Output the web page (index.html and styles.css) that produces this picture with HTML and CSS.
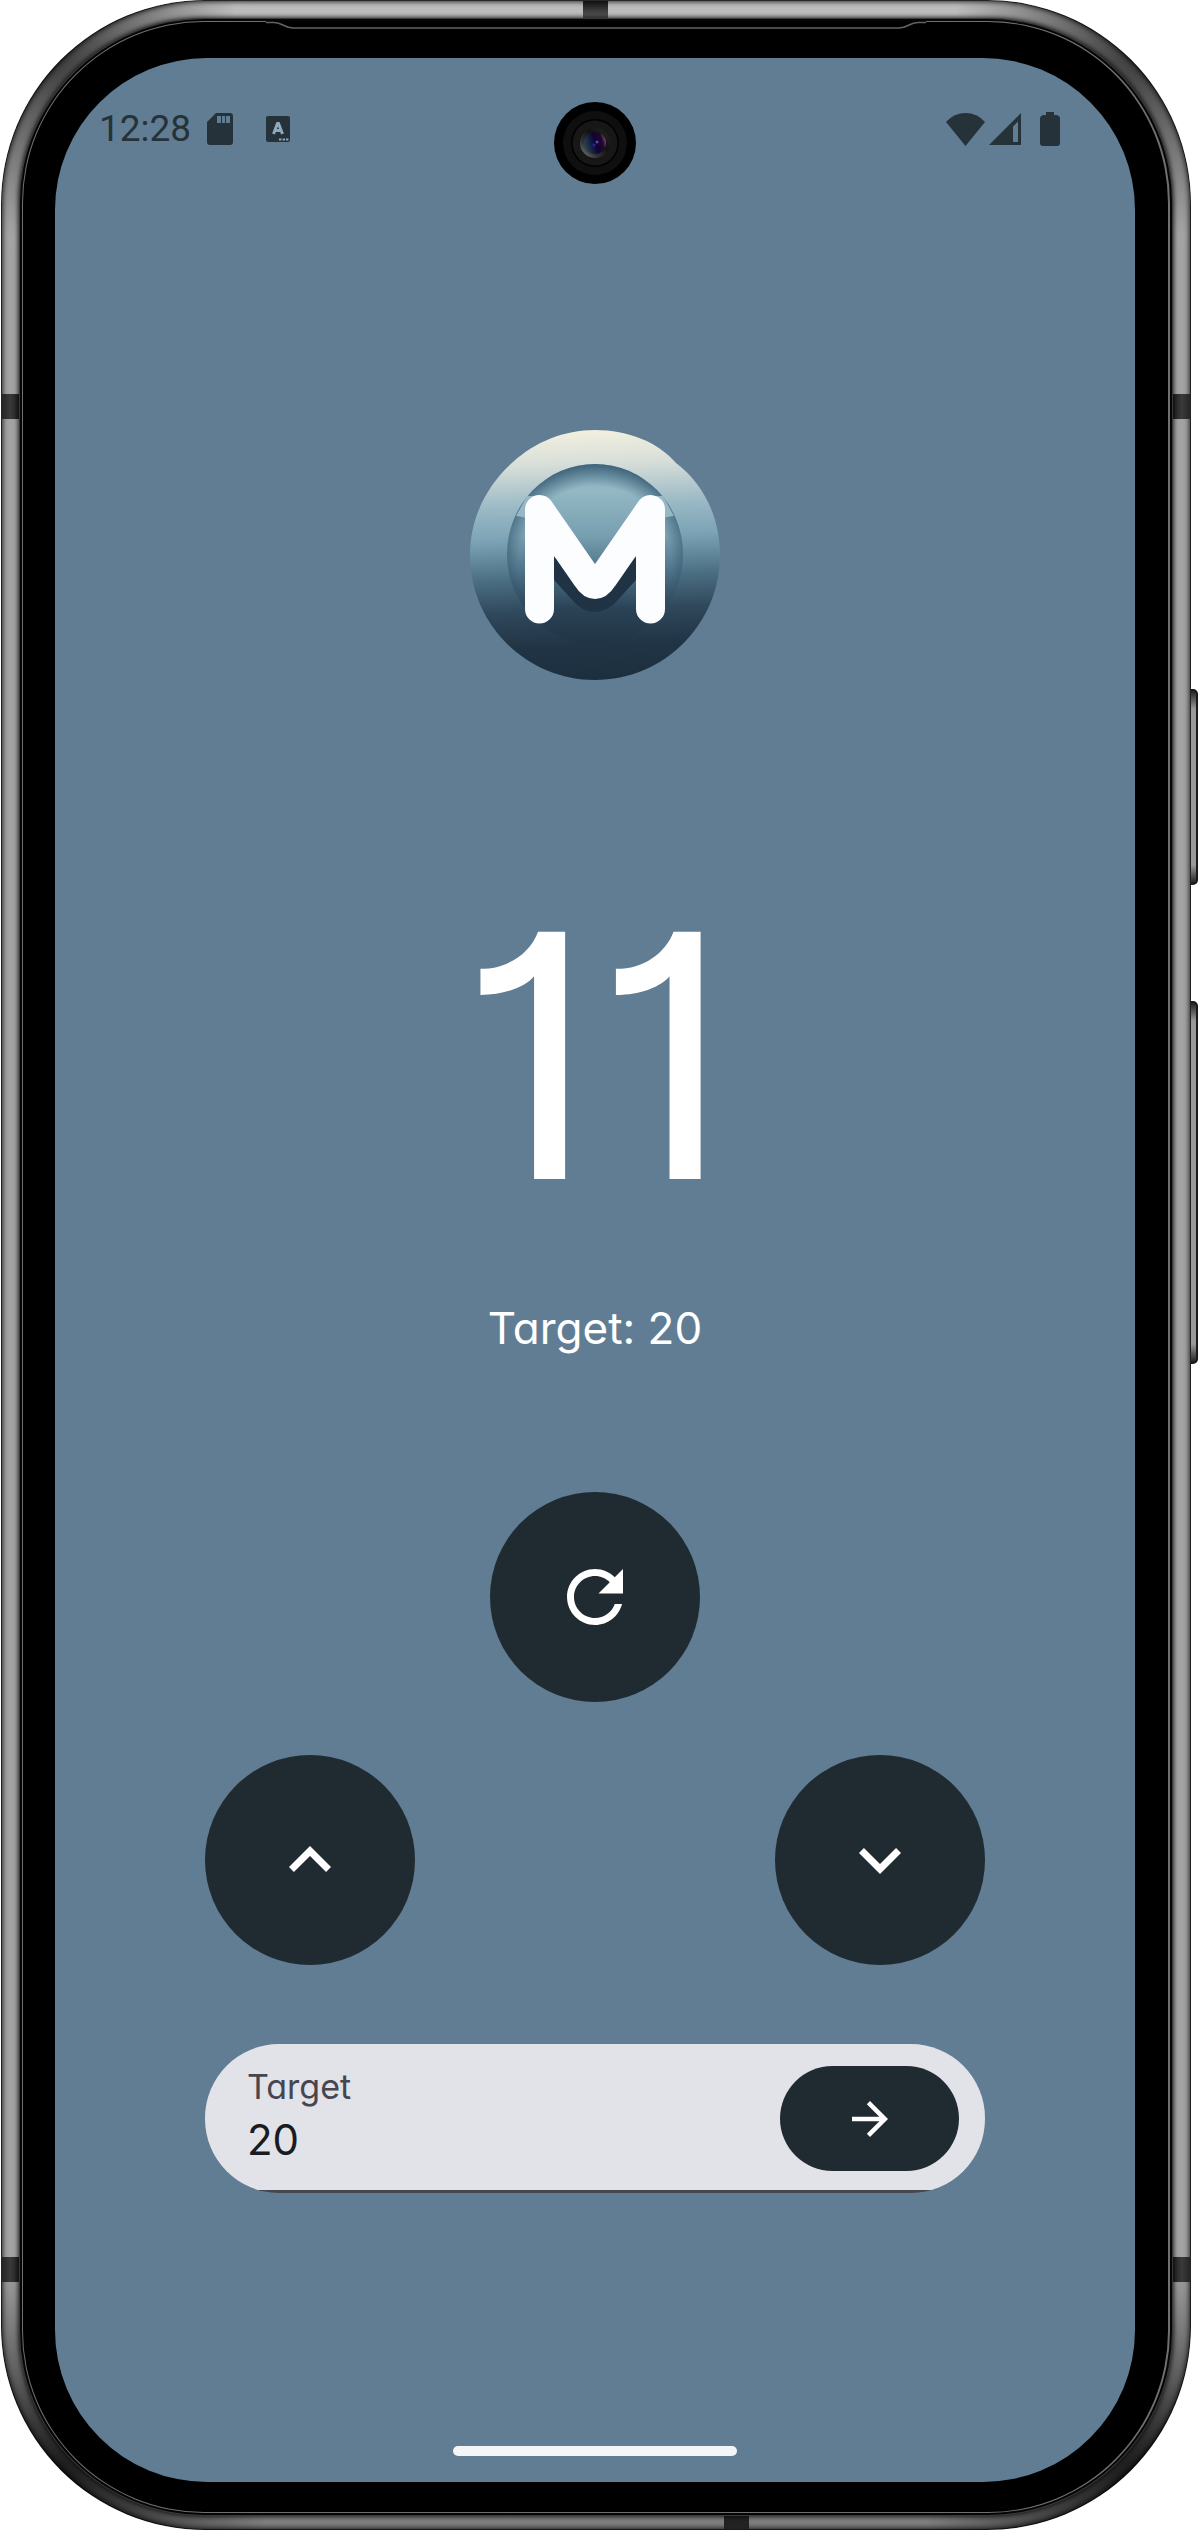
FILE: index.html
```html
<!DOCTYPE html>
<html lang="en">
<head>
<meta charset="utf-8">
<meta name="viewport" content="width=device-width, initial-scale=1">
<title>Counter</title>
<link rel="stylesheet" href="styles.css">
</head>
<body>
<div class="device">
  <span class="side-key side-key-power"></span>
  <span class="side-key side-key-volume"></span>
  <div class="frame">
    <span class="seam seam-top"></span>
    <span class="seam seam-bottom"></span>
    <span class="seam seam-left seam-upper"></span>
    <span class="seam seam-right seam-upper"></span>
    <span class="seam seam-left seam-lower"></span>
    <span class="seam seam-right seam-lower"></span>
    <div class="bezel">
      <svg class="earpiece" viewBox="0 0 660 10" aria-hidden="true"><path d="M0 0H660V3H0Z" fill="#000"/><path d="M0 1.5H8C17 1.5 18 7 27 7H633C642 7 643 1.5 652 1.5H660" fill="none" stroke="#636363" stroke-width="1.6"/></svg>
      <div class="screen">
        <header class="status">
          <div class="status-group">
            <span class="clock">12:28</span>
            <svg class="icon-sd" viewBox="0 0 26 32" aria-hidden="true"><path fill-rule="evenodd" d="M9 0H23Q26 0 26 3V29Q26 32 23 32H3Q0 32 0 29V9ZM10 3V10H14V3ZM15 3V10H18V3ZM19 3V10H23V3Z"/></svg>
            <svg class="icon-app" viewBox="0 0 24 26" aria-hidden="true"><rect width="24" height="26" rx="2"/><path class="cut" d="M7.500 18 11.500 7.500H12.500L16.500 18M9 14.500H15"/><path class="dots" d="M13 22.500h2.400v2H13zM16.600 22.500H19v2h-2.400zM20 22.500h2.400v2H20z"/></svg>
          </div>
          <div class="status-group status-end">
            <svg class="icon-wifi" viewBox="0 0 39 33" aria-hidden="true"><path d="M0 9Q8 0 19.500 0T39 9L19.500 33Z"/></svg>
            <svg class="icon-signal" viewBox="0 0 32 32" aria-hidden="true"><path fill-rule="evenodd" d="M32 0V32H0ZM29 8.500 24 13.500V29H29Z"/></svg>
            <svg class="icon-battery" viewBox="0 0 20 34" aria-hidden="true"><path d="M6 0H14V3H17Q20 4 20 6V31Q20 34 17 34H3Q0 34 0 31V6Q0 4 3 3H6Z"/></svg>
          </div>
          <svg class="camera" viewBox="0 0 82 82" aria-hidden="true">
            <defs>
              <linearGradient id="ring" x1="0" y1="1" x2="1" y2="0"><stop offset="0" stop-color="#888"/><stop offset=".3" stop-color="#333"/><stop offset=".6" stop-color="#111"/><stop offset="1" stop-color="#292929"/></linearGradient>
              <linearGradient id="lens" x1="0" y1=".6" x2="1" y2=".3"><stop offset="0" stop-color="#244652"/><stop offset=".5" stop-color="#0d0535"/><stop offset=".8" stop-color="#220724"/><stop offset="1" stop-color="#805087"/></linearGradient>
            </defs>
            <circle cx="41" cy="41" r="41"/><circle cx="41" cy="41" r="32" fill="#0f0f0f"/><circle cx="41" cy="41" r="24" fill="#000"/><circle cx="41" cy="41" r="22.500" fill="#171717"/><circle cx="41" cy="41" r="15" fill="url(#ring)"/><circle cx="41" cy="41" r="11" fill="url(#lens)"/><circle cx="43" cy="40" r="1.500" fill="#5540d8"/><circle cx="40" cy="43" r="1.500" fill="#2a22a0"/>
          </svg>
        </header>
        <main class="content">
          <svg class="logo" viewBox="0 0 250 250" role="img" aria-label="M">
            <defs>
              <linearGradient id="disc" x1=".48" y1="0" x2=".52" y2="1"><stop offset="0" stop-color="#f2efdf"/><stop offset=".13" stop-color="#d8dfd9"/><stop offset=".3" stop-color="#9ab9c5"/><stop offset=".43" stop-color="#7ba3b5"/><stop offset=".58" stop-color="#4d7085"/><stop offset=".72" stop-color="#2f485b"/><stop offset=".86" stop-color="#213445"/><stop offset="1" stop-color="#1c2f3f"/></linearGradient>
              <linearGradient id="dish" x1="0" y1="0" x2="0" y2="1"><stop offset="0" stop-color="#88aebb"/><stop offset=".15" stop-color="#94b8c4"/><stop offset=".4" stop-color="#779fb0"/><stop offset=".6" stop-color="#4d7186"/><stop offset=".8" stop-color="#2b4357"/><stop offset="1" stop-color="#203343"/></linearGradient>
              <radialGradient id="edge" cx=".5" cy=".56" r=".56"><stop offset=".78" stop-color="#2b506a" stop-opacity="0"/><stop offset="1" stop-color="#2b506a" stop-opacity=".8"/></radialGradient>
            </defs>
            <path d="M125 0C158 0 188 12 206 33C234 54 250 88 250 125C250 194 194 250 125 250S0 194 0 125C0 90 15 57 43 32C65 12 94 0 125 0Z" fill="url(#disc)"/>
            <ellipse cx="125" cy="124" rx="88" ry="90" fill="url(#dish)"/>
            <ellipse cx="125" cy="124" rx="88" ry="90" fill="url(#edge)"/>
            <path d="M46 86 57 66H68V90L47 86ZM204 86 193 66H182V90L203 86Z" fill="#97b7c3"/>
            <path d="M84 127V150L106 174Q124 190 144 174L166 150V127L125 158Z" fill="#1f3344"/>
            <path d="M69.500 179V79.500L117 148Q125 161 133 148L180.500 79.500V179" fill="none" stroke="#fcfdff" stroke-width="29" stroke-linecap="round" stroke-linejoin="round"/>
          </svg>
          <output class="count">11</output>
          <p class="goal">Target: 20</p>
          <div class="pad">
            <button class="round reset" type="button" aria-label="Reset"><svg class="round-icon" viewBox="0 0 24 24"><path d="M17.650 6.350C16.200 4.900 14.210 4 12 4c-4.420 0-7.990 3.580-7.990 8s3.570 8 7.990 8c3.730 0 6.840-2.550 7.730-6h-2.080c-.82 2.330-3.040 4-5.650 4-3.310 0-6-2.690-6-6s2.690-6 6-6c1.660 0 3.140.69 4.220 1.780L13 11h7V4l-2.350 2.350z"/></svg></button>
            <button class="round" type="button" aria-label="Increase"><svg class="round-icon" viewBox="0 0 24 24"><path d="M7.410 15.410 12 10.830l4.590 4.580L18 14l-6-6-6 6z"/></svg></button>
            <button class="round" type="button" aria-label="Decrease"><svg class="round-icon" viewBox="0 0 24 24"><path d="M7.410 8.590 12 13.170l4.590-4.580L18 10l-6 6-6-6z"/></svg></button>
          </div>
          <form class="field">
            <div class="field-text">
              <label class="field-label" for="target">Target</label>
              <input class="field-input" id="target" type="text" inputmode="numeric" value="20">
            </div>
            <button class="send" type="button" aria-label="Set target"><svg class="send-icon" viewBox="0 0 24 24"><path d="M12 4l-1.410 1.410L16.170 11H4v2h12.170l-5.580 5.590L12 20l8-8z"/></svg></button>
          </form>
        </main>
        <div class="home-bar"></div>
      </div>
    </div>
  </div>
</div>
</body>
</html>
```
FILE: styles.css
```css
* { box-sizing: border-box; }

body {
  margin: 0;
  background: #fff;
  font-family: Inter, "Open Sans", sans-serif;
}

.device {
  position: relative;
  padding: 0 7px 1px 1px;
}

/* Phone shell */
.frame {
  position: relative;
  padding: 21px 21px 17px;
  border-radius: 204px;
  background:
    radial-gradient(circle at 50px 50px, rgba(0, 0, 0, .7), transparent 190px),
    radial-gradient(circle at calc(100% - 50px) 50px, rgba(0, 0, 0, .7), transparent 190px),
    radial-gradient(circle at 50px calc(100% - 50px), rgba(0, 0, 0, .85), transparent 220px),
    radial-gradient(circle at calc(100% - 50px) calc(100% - 50px), rgba(0, 0, 0, .85), transparent 220px),
    linear-gradient(#bdbdbd, #a2a2a2 10%, #a2a2a2 94%, #7c7c7c);
  box-shadow:
    inset 0 0 0 1px rgba(0, 0, 0, .55),
    inset 0 0 5px 2px rgba(0, 0, 0, .75);
}

.bezel {
  position: relative;
  padding: 36px 33px 30px 32px;
  border: 1px solid #707070;
  border-right-width: 2px;
  border-radius: 182px;
  background: #000;
  box-shadow: 0 0 0 2px #050505, 0 0 0 3px #3a3a3a, 0 0 4px 4px rgba(0, 0, 0, .75);
}

.earpiece {
  position: absolute;
  top: -1px;
  left: calc(50% - 330px);
  width: 660px;
  height: 10px;
}

.seam {
  position: absolute;
  background: linear-gradient(90deg, #222, #3a3a3a, #222);
}
.seam-top, .seam-bottom { width: 25px; height: 19px; }
.seam-top { top: 1px; left: calc(50% - 13px); background: linear-gradient(#111, #666); }
.seam-bottom { bottom: 1px; left: 723px; height: 15px; background: #222; }
.seam-left, .seam-right { width: 18px; height: 25px; }
.seam-left { left: 0; }
.seam-right { right: 0; }
.seam-upper { top: 394px; }
.seam-lower { bottom: 248px; }

.side-key {
  position: absolute;
  right: 0;
  width: 9px;
  border: 2px solid #1a1a1a;
  border-radius: 0 5px 5px 0;
  background: linear-gradient(#222, #999 18px, #999 calc(100% - 18px), #222);
}
.side-key-power { top: 689px; height: 196px; }
.side-key-volume { top: 1001px; height: 363px; }

/* Screen */
.screen {
  display: flex;
  flex-direction: column;
  align-items: center;
  border-radius: 152px;
  background: #617d93;
  color: #fff;
}

.status {
  position: relative;
  display: flex;
  justify-content: space-between;
  align-items: center;
  width: 100%;
  height: 142px;
  padding: 0 75px 0 44px;
  color: #26323a;
}
.status svg { fill: currentColor; }
.status-group { display: flex; align-items: center; gap: 4px; }
.clock { font: 37px/44px Roboto, sans-serif; }
.icon-sd { width: 26px; height: 32px; margin: 0 29px 0 12px; }
.icon-app { width: 24px; height: 26px; }
.status .cut { fill: none; stroke: #8fa9bd; stroke-width: 3; }
.status .dots { fill: #8fa9bd; }
.icon-wifi { width: 39px; height: 33px; }
.icon-signal { width: 32px; height: 32px; }
.icon-battery { width: 20px; height: 34px; margin-left: 15px; }
.status .camera {
  position: absolute;
  top: 44px;
  left: calc(50% - 41px);
  width: 82px;
  height: 82px;
  fill: #000;
}

.content {
  display: flex;
  flex-direction: column;
  align-items: center;
  width: 100%;
  padding: 230px 150px 0;
}

.logo { width: 250px; height: 250px; }

.count {
  margin-top: 201px;
  font-size: 340px;
  font-weight: 400;
  line-height: 350px;
  font-feature-settings: "cv01";
}

.goal {
  margin: 67px 0 0;
  font-size: 44px;
  line-height: 60px;
  font-feature-settings: "cv11";
}

.pad {
  display: grid;
  grid-template-columns: auto auto;
  justify-content: space-between;
  row-gap: 53px;
  width: 100%;
  margin-top: 134px;
}

.round {
  display: grid;
  place-items: center;
  width: 210px;
  height: 210px;
  padding: 0;
  border: 0;
  border-radius: 50%;
  background: #202b31;
}
.reset { grid-column: 1 / -1; justify-self: center; }
.round-icon { width: 84px; height: 84px; fill: #fff; }

.field {
  display: flex;
  align-items: center;
  width: 100%;
  height: 149px;
  margin-top: 79px;
  padding: 0 26px 0 42px;
  overflow: hidden;
  border-radius: 74px;
  background: linear-gradient(#45464f, #45464f) bottom / 100% 3px no-repeat #e2e2e9;
}
.field-text { display: flex; flex: 1; flex-direction: column; min-width: 0; }
.field-label {
  color: #45464f;
  font-size: 34px;
  line-height: 42px;
  font-feature-settings: "cv11";
}
.field-input {
  width: 100%;
  height: 63px;
  padding: 0;
  border: 0;
  outline: 0;
  background: none;
  color: #1a1b20;
  font: 42px/63px Inter, sans-serif;
}
.send {
  display: grid;
  place-items: center;
  width: 179px;
  height: 105px;
  padding: 0;
  border: 0;
  border-radius: 53px;
  background: #202b31;
}
.send-icon { width: 54px; height: 54px; fill: #fff; }

.home-bar {
  width: 284px;
  height: 10px;
  margin: 253px 0 26px;
  border-radius: 5px;
  background: #f4f5f7;
}
```
